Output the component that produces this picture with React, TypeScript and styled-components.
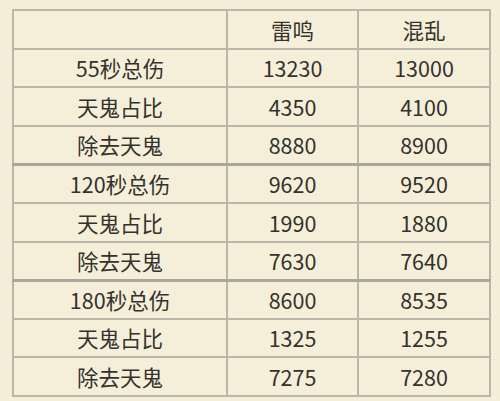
import * as React from 'react'
import styled, { createGlobalStyle } from 'styled-components'

const GlobalStyle = createGlobalStyle`
  html, body {
    margin: 0;
    padding: 0;
    background: #f4eed8;
  }
  body {
    font-family: "Noto Sans CJK SC", "Noto Sans", sans-serif;
  }
`

type Row = { label: string; a: string; b: string }

const groups: Row[][] = [
  [
    { label: '55秒总伤', a: '13230', b: '13000' },
    { label: '天鬼占比', a: '4350', b: '4100' },
    { label: '除去天鬼', a: '8880', b: '8900' },
  ],
  [
    { label: '120秒总伤', a: '9620', b: '9520' },
    { label: '天鬼占比', a: '1990', b: '1880' },
    { label: '除去天鬼', a: '7630', b: '7640' },
  ],
  [
    { label: '180秒总伤', a: '8600', b: '8535' },
    { label: '天鬼占比', a: '1325', b: '1255' },
    { label: '除去天鬼', a: '7275', b: '7280' },
  ],
]

export default function App() {
  return (
    <Page>
      <GlobalStyle />
      <Table>
        <colgroup>
          <col style={{ width: 214 }} />
          <col style={{ width: 131 }} />
          <col style={{ width: 132 }} />
        </colgroup>
        <thead>
          <Tr>
            <Cell />
            <Cell>雷鸣</Cell>
            <Cell>混乱</Cell>
          </Tr>
        </thead>
        {groups.map((rows, gi) => (
          <Group key={gi} $first={gi === 0}>
            {rows.map((r, ri) => (
              <Tr key={ri}>
                <Cell>{r.label}</Cell>
                <Cell>{r.a}</Cell>
                <Cell>{r.b}</Cell>
              </Tr>
            ))}
          </Group>
        ))}
      </Table>
    </Page>
  )
}

const Page = styled.div`
  padding: 9px 0 0 12px;
`

const Table = styled.table`
  border-collapse: collapse;
  table-layout: fixed;
  width: 477px;
  background: #f5efda;
  border: 2px solid #b3b0a4;
`

const Group = styled.tbody<{ $first: boolean }>`
  border-top: ${(p) => (p.$first ? '2px' : '3px')} solid #a9a69a;
`

const Tr = styled.tr`
  height: 38.6px;
`

const Cell = styled.td`
  border: 2px solid #bab7aa;
  padding: 0;
  text-align: center;
  vertical-align: middle;
  font-size: 21.5px;
  color: #33322d;
  line-height: 1;
`
